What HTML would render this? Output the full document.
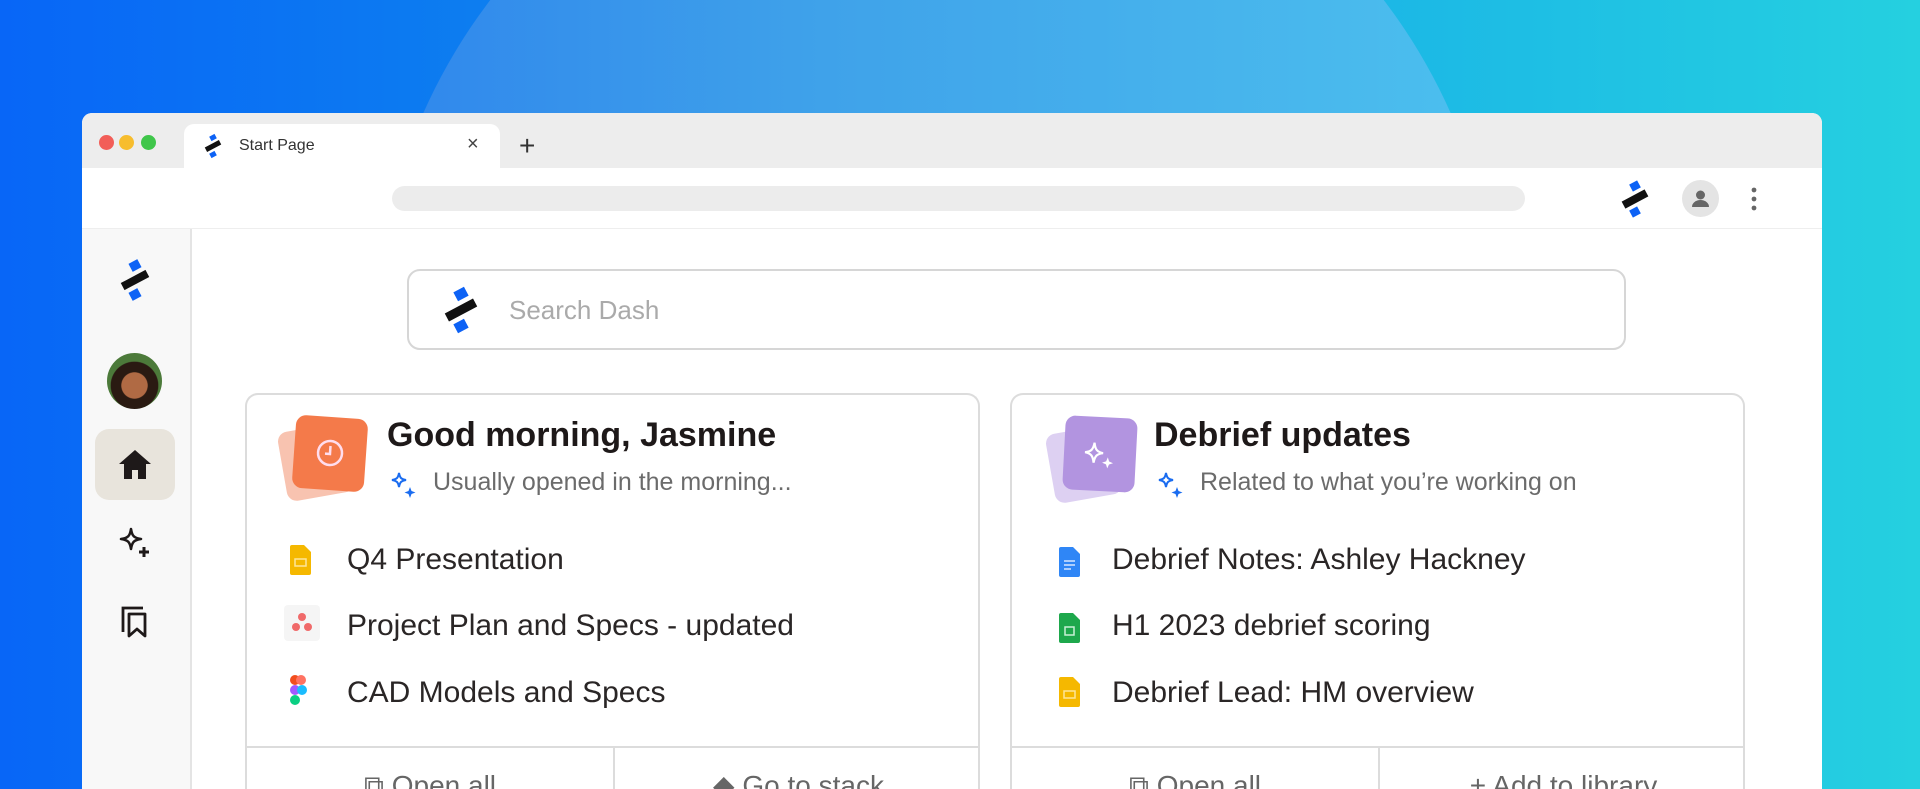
<!DOCTYPE html>
<html><head><meta charset="utf-8"><style>
*{margin:0;padding:0;box-sizing:border-box}
html,body{width:1920px;height:789px;overflow:hidden}
body{position:relative;font-family:"Liberation Sans",sans-serif;background:linear-gradient(90deg,#0866f7 0%,#1190ea 45%,#1bb6e6 70%,#25d0e0 100%)}
.bg{position:absolute;left:0;top:0;width:1920px;height:789px;overflow:hidden}
.circ{position:absolute;left:375px;top:-221px;width:1124px;height:1124px;border-radius:50%;background:linear-gradient(90deg,#2f86ec 0%,#3fa2ea 40%,#4cc0ee 100%)}
.win{position:absolute;left:82px;top:113px;width:1740px;height:676px;background:#fff;border-radius:10px 10px 0 0;overflow:hidden}
.tabbar{position:absolute;left:0;top:0;width:100%;height:55px;background:#ededed}
.tab{position:absolute;left:102px;top:11px;width:316px;height:45px;background:#fff;border-radius:10px 10px 0 0}
.dot{position:absolute;top:22px;width:15px;height:15px;border-radius:50%}
.tool{position:absolute;left:0;top:55px;width:100%;height:61px;background:#fff;border-bottom:1px solid #eee}
.url{position:absolute;left:310px;top:18px;width:1133px;height:25px;border-radius:13px;background:#ececec}
.side{position:absolute;left:0;top:116px;width:110px;height:560px;background:#f8f8f8;border-right:2px solid #e4e4e4}
.search{position:absolute;left:325px;top:156px;width:1219px;height:81px;border:2px solid #d6d6d6;border-radius:13px}
.card{position:absolute;top:280px;height:396px;border:2px solid #dcdcdc;border-bottom:none;border-radius:13px 13px 0 0;background:#fff;overflow:hidden}
.title{position:absolute;font-size:34px;font-weight:bold;color:#1e1919}
.sub{position:absolute;font-size:25px;color:#6b6b6b}
.item{position:absolute;font-size:30px;color:#2a2626}
.div{position:absolute;left:0;right:0;top:351px;border-top:2px solid #dcdcdc}
.btn{position:absolute;top:353px;height:43px;font-size:28px;color:#666;text-align:center;line-height:76px;overflow:hidden}
</style></head><body>
<div class="bg"><div class="circ"></div></div>
<div class="win">
 <div class="tabbar">
  <div class="dot" style="left:17px;background:#f25e58"></div>
  <div class="dot" style="left:37px;background:#f7bd2e"></div>
  <div class="dot" style="left:59px;background:#3fc64a"></div>
  <div class="tab">
   <svg style="position:absolute;left:16px;top:9px" width="26" height="26" viewBox="-13 -13 26 26"><rect x="-3" y="-11" width="6" height="5" fill="#0d62f5" transform="rotate(-28 0 -8.5)"/><rect x="-8" y="-2.5" width="16" height="5" fill="#111" transform="rotate(-28)"/><rect x="-3" y="6" width="6" height="5" fill="#0d62f5" transform="rotate(-28 0 8.5)"/></svg>
   <div style="position:absolute;left:55px;top:13px;font-size:16px;color:#333">Start Page</div>
   <div style="position:absolute;left:283px;top:9px;font-size:20px;color:#444">×</div>
  </div>
  <div style="position:absolute;left:437px;top:17px;font-size:28px;color:#333">+</div>
 </div>
 <div class="tool">
  <div class="url"></div>
  <svg style="position:absolute;left:1532px;top:10px" width="42" height="42" viewBox="-21 -21 42 42"><rect x="-4.5" y="-17" width="9" height="8" fill="#0d62f5" transform="rotate(-28 0 -13)"/><rect x="-13" y="-4" width="26" height="8" fill="#111" transform="rotate(-28)"/><rect x="-4.5" y="9" width="9" height="8" fill="#0d62f5" transform="rotate(-28 0 13)"/></svg>
  <div style="position:absolute;left:1600px;top:12px;width:37px;height:37px;border-radius:50%;background:#e4e4e4"><svg width="37" height="37" viewBox="0 0 37 37"><circle cx="18.5" cy="15" r="4.5" fill="#666"/><path d="M10 27a8.5 7 0 0 1 17 0z" fill="#666"/></svg></div>
  <svg style="position:absolute;left:1668px;top:19px" width="8" height="24"><circle cx="4" cy="3" r="2.4" fill="#666"/><circle cx="4" cy="12" r="2.4" fill="#666"/><circle cx="4" cy="21" r="2.4" fill="#666"/></svg>
 </div>
 <div class="side">
  <svg style="position:absolute;left:30px;top:28px" width="46" height="46" viewBox="-23 -23 46 46"><rect x="-5" y="-19" width="10" height="9" fill="#0d62f5" transform="rotate(-28 0 -14.5)"/><rect x="-14" y="-4" width="28" height="8" fill="#111" transform="rotate(-28)"/><rect x="-5" y="10" width="10" height="9" fill="#0d62f5" transform="rotate(-28 0 14.5)"/></svg>
  <div style="position:absolute;left:25px;top:124px;width:55px;height:56px;border-radius:50%;background:radial-gradient(circle at 50% 58%,#b06a44 0 30%,#2a1a12 32% 55%,#4c7a3a 57%)"></div>
  <div style="position:absolute;left:13px;top:200px;width:80px;height:71px;border-radius:14px;background:#e8e4dc"></div>
  <svg style="position:absolute;left:35px;top:218px" width="36" height="36" viewBox="0 0 36 36"><path d="M18 3L2 17h5v15h8v-9h6v9h8V17h5z" fill="#1e1919"/></svg>
  <svg style="position:absolute;left:35px;top:297px" width="36" height="36" viewBox="0 0 36 36"><path d="M14 3c1 7 3 9 10 10c-7 1-9 3-10 10c-1-7-3-9-10-10c7-1 9-3 10-10z" fill="none" stroke="#1e1919" stroke-width="2.6" stroke-linejoin="round"/><path d="M27 21v10M22 26h10" stroke="#1e1919" stroke-width="3"/></svg>
  <svg style="position:absolute;left:37px;top:375px" width="34" height="36" viewBox="0 0 34 36"><path d="M4 28V4h20" fill="none" stroke="#1e1919" stroke-width="2.8"/><path d="M10 10h16v22l-8-7l-8 7z" fill="none" stroke="#1e1919" stroke-width="2.8" stroke-linejoin="round"/></svg>
 </div>
 <div class="search">
  <svg style="position:absolute;left:28px;top:15px" width="48" height="48" viewBox="-24 -24 48 48"><rect x="-6" y="-21" width="12" height="10" fill="#0d62f5" transform="rotate(-28 0 -16)"/><rect x="-16" y="-4.5" width="32" height="9" fill="#111" transform="rotate(-28)"/><rect x="-6" y="11" width="12" height="10" fill="#0d62f5" transform="rotate(-28 0 16)"/></svg>
  <div style="position:absolute;left:100px;top:24px;font-size:26px;color:#aaa">Search Dash</div>
 </div>
 <div class="card" style="left:163px;width:735px">
  <div style="position:absolute;left:35px;top:32px;width:68px;height:70px;border-radius:10px;background:#f8c3b0;transform:rotate(-10deg)"></div>
  <div style="position:absolute;left:47px;top:22px;width:72px;height:73px;border-radius:10px;background:#f47a4a;transform:rotate(4deg)"><svg width="72" height="73" viewBox="0 0 72 73"><circle cx="36" cy="36" r="12" fill="none" stroke="#fde" stroke-width="2.5"/><path d="M36 29v8h-5" fill="none" stroke="#fde" stroke-width="2.5"/></svg></div>
  <div class="title" style="left:140px;top:21px">Good morning, Jasmine</div>
  <svg style="position:absolute;left:142px;top:75px" width="28" height="28" viewBox="0 0 28 28"><path d="M10 3c1 5 2 6 7 7c-5 1-6 2-7 7c-1-5-2-6-7-7c5-1 6-2 7-7z" fill="none" stroke="#1a6cf0" stroke-width="2"/><path d="M21 17l1.5 4l4 1.5l-4 1.5l-1.5 4l-1.5-4l-4-1.5l4-1.5z" fill="#1a6cf0"/></svg>
  <div class="sub" style="left:186px;top:73px">Usually opened in the morning...</div>
  <svg style="position:absolute;left:43px;top:150px" width="24" height="30"><path d="M0 2a2 2 0 0 1 2-2h12l7 7v21a2 2 0 0 1-2 2H2a2 2 0 0 1-2-2z" fill="#f5b800"/><rect x="5" y="14" width="11" height="7" fill="none" stroke="#fde59a" stroke-width="1.5"/></svg>
  <div class="item" style="left:100px;top:148px">Q4 Presentation</div>
  <div style="position:absolute;left:37px;top:210px;width:36px;height:36px;background:#f5f5f5;border-radius:4px"><svg width="36" height="36"><circle cx="18" cy="12" r="4" fill="#f06a6a"/><circle cx="12" cy="22" r="4" fill="#f06a6a"/><circle cx="24" cy="22" r="4" fill="#f06a6a"/></svg></div>
  <div class="item" style="left:100px;top:214px">Project Plan and Specs - updated</div>
  <svg style="position:absolute;left:43px;top:280px" width="20" height="30"><rect x="0" y="0" width="10" height="10" rx="5" fill="#f24e1e"/><rect x="6" y="0" width="10" height="10" rx="5" fill="#ff7262"/><rect x="0" y="10" width="10" height="10" rx="5" fill="#a259ff"/><circle cx="12" cy="15" r="5" fill="#1abcfe"/><rect x="0" y="20" width="10" height="10" rx="5" fill="#0acf83"/></svg>
  <div class="item" style="left:100px;top:281px">CAD Models and Specs</div>
  <div class="div"></div>
  <div style="position:absolute;left:366px;top:353px;height:43px;border-left:2px solid #dcdcdc"></div>
  <div class="btn" style="left:0;width:366px">⧉ Open all</div>
  <div class="btn" style="left:368px;width:367px">◆ Go to stack</div>
 </div>
 <div class="card" style="left:928px;width:735px">
  <div style="position:absolute;left:38px;top:34px;width:68px;height:70px;border-radius:10px;background:#ddd0f2;transform:rotate(-10deg)"></div>
  <div style="position:absolute;left:52px;top:22px;width:72px;height:74px;border-radius:10px;background:#b294e0;transform:rotate(3deg)"><svg width="72" height="74" viewBox="0 0 72 74"><path d="M30 26c1 7 3 9 9 10c-6 1-8 3-9 10c-1-7-3-9-9-10c6-1 8-3 9-10z" fill="none" stroke="#fff" stroke-width="2.2"/><path d="M44 40l1.5 4l4 1.5l-4 1.5l-1.5 4l-1.5-4l-4-1.5l4-1.5z" fill="#fff"/></svg></div>
  <div class="title" style="left:142px;top:21px">Debrief updates</div>
  <svg style="position:absolute;left:144px;top:75px" width="28" height="28" viewBox="0 0 28 28"><path d="M10 3c1 5 2 6 7 7c-5 1-6 2-7 7c-1-5-2-6-7-7c5-1 6-2 7-7z" fill="none" stroke="#1a6cf0" stroke-width="2"/><path d="M21 17l1.5 4l4 1.5l-4 1.5l-1.5 4l-1.5-4l-4-1.5l4-1.5z" fill="#1a6cf0"/></svg>
  <div class="sub" style="left:188px;top:73px">Related to what you’re working on</div>
  <svg style="position:absolute;left:47px;top:152px" width="22" height="30"><path d="M0 2a2 2 0 0 1 2-2h12l7 7v21a2 2 0 0 1-2 2H2a2 2 0 0 1-2-2z" fill="#2f86f6"/><path d="M5 14h11M5 18h11M5 22h7" stroke="#d5e6ff" stroke-width="1.5"/></svg>
  <div class="item" style="left:100px;top:148px">Debrief Notes: Ashley Hackney</div>
  <svg style="position:absolute;left:47px;top:218px" width="22" height="30"><path d="M0 2a2 2 0 0 1 2-2h12l7 7v21a2 2 0 0 1-2 2H2a2 2 0 0 1-2-2z" fill="#1ea84c"/><rect x="6" y="14" width="9" height="8" fill="none" stroke="#c9f0d5" stroke-width="1.5"/></svg>
  <div class="item" style="left:100px;top:214px">H1 2023 debrief scoring</div>
  <svg style="position:absolute;left:47px;top:282px" width="22" height="30"><path d="M0 2a2 2 0 0 1 2-2h12l7 7v21a2 2 0 0 1-2 2H2a2 2 0 0 1-2-2z" fill="#f5b800"/><rect x="5" y="14" width="11" height="7" fill="none" stroke="#fde59a" stroke-width="1.5"/></svg>
  <div class="item" style="left:100px;top:281px">Debrief Lead: HM overview</div>
  <div class="div"></div>
  <div style="position:absolute;left:366px;top:353px;height:43px;border-left:2px solid #dcdcdc"></div>
  <div class="btn" style="left:0;width:366px">⧉ Open all</div>
  <div class="btn" style="left:368px;width:367px">+ Add to library</div>
 </div>
</div>
</body></html>
